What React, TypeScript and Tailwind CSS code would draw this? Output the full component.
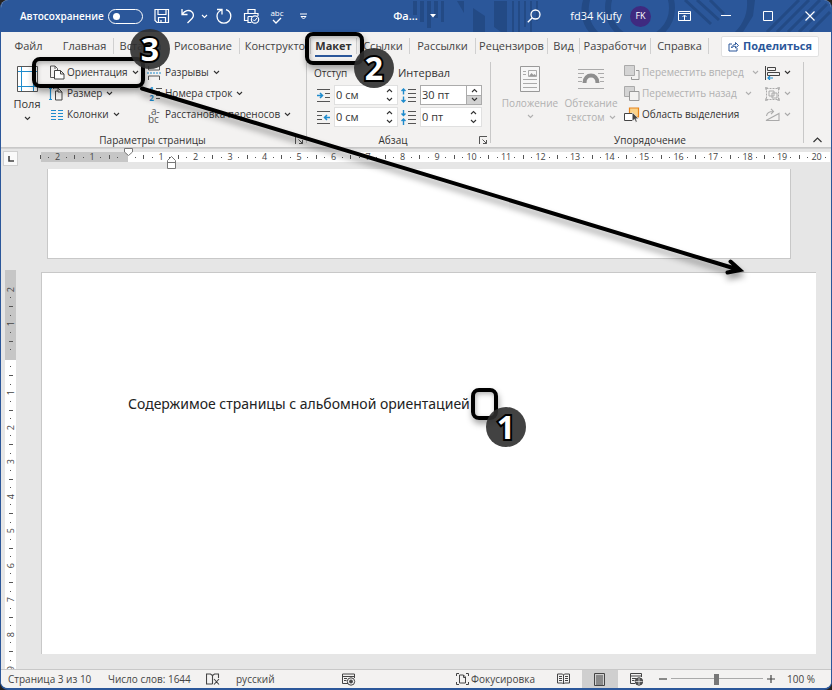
import type { ReactNode } from 'react'
import clsx from 'clsx'

const BLUE = '#1e8bcd'

function Svg({ w, h, className, children }: { w: number; h: number; className?: string; children: ReactNode }) {
  return (
    <svg width={w} height={h} viewBox={`0 0 ${w} ${h}`} fill="none" stroke="currentColor" strokeWidth="1" className={clsx('shrink-0', className)} aria-hidden="true">
      {children}
    </svg>
  )
}

function Chevron({ className }: { className?: string }) {
  return (
    <Svg w={7} h={5} className={className}>
      <path d="M1 1l2.500 2.500L6 1" strokeWidth="1.100" />
    </Svg>
  )
}

function Launcher() {
  return (
    <button type="button" aria-label="Параметры" className="text-[#555]">
      <Svg w={9} h={9}>
        <path d="M.5 8V.5H8M3.500 3.500L7.500 7.500M7.500 4v3.500H4" />
      </Svg>
    </button>
  )
}

const TABS = [
  { name: 'Файл', width: 'w-[55px]', line: false },
  { name: 'Главная', width: 'w-[58px]', line: true },
  { name: 'Вставка', width: 'w-[53px]', line: false },
  { name: 'Рисование', width: 'w-[73px]', line: true },
  { name: 'Конструкто', width: 'w-[71px]', line: true },
  { name: 'Макет', width: 'w-[46px]', line: true },
  { name: 'Ссылки', width: 'w-[53px]', line: true },
  { name: 'Рассылки', width: 'w-[66px]', line: true },
  { name: 'Рецензиров', width: 'w-[72px]', line: true },
  { name: 'Вид', width: 'w-8', line: true },
  { name: 'Разработчи', width: 'w-[71px]', line: true },
  { name: 'Справка', width: 'w-[58px]', line: true },
]

function TitlePattern() {
  return (
    <svg width="420" height="32" viewBox="412 0 420 32" className="absolute right-0 top-0" aria-hidden="true">
      <g fill="#234a85">
        <path d="M414 1h4v14h-4zM421 1h4v21h-4zM428 1h4v27h-4zM435 1h4v17h-4zM442 1h3v21h-3zM458 1h7v12zM474 8l12 8v16h-12zM495 1h13v31h-6l-7-5zM513 1h2v31h-2zM519 1h2v31h-2zM525 1h2v26h-2zM531 1h2v31h-2zM537 1h2v20h-2z" />
        <path d="M590 32c-8-10-9-22-6-32h7c-3 12-1 22 8 32zM756 0l-2 16-10 16h-8c9-9 13-20 12-32z" />
      </g>
      <g fill="none" stroke="#234a85">
        <circle cx="641" cy="8" r="32" strokeWidth="6" />
        <path d="M686 0l26 24M698 0l22 20M711 0l14 14M768 32l32-32M778 32l32-32M789 32l32-32M800 32l28-28M811 32l20-20" strokeWidth="3" />
      </g>
    </svg>
  )
}

function TitleBar() {
  return (
    <header className="relative flex h-8 shrink-0 items-center bg-[#2b579a] text-white">
      <TitlePattern />
      <label className="relative flex items-center pl-[19px] text-[10px] font-semibold">
        <span className="w-[88px] whitespace-nowrap">Автосохранение</span>
        <input
          type="checkbox"
          role="switch"
          className="h-[15px] w-[35px] appearance-none rounded-full border border-white before:mt-[3px] before:ml-1 before:block before:size-[7px] before:rounded-full before:bg-white"
        />
      </label>
      <div className="relative ml-1 flex items-center">
        <button type="button" aria-label="Сохранить" className="flex w-[30px] justify-center">
          <Svg w={16} h={16}>
            <path d="M1 1.500h13.500v13H3L1 12.500zM4 1.500v5h8v-5M4.500 14.500v-5h7v5M7 14v-2" strokeWidth="1.200" />
          </Svg>
        </button>
        <button type="button" aria-label="Отменить" className="flex w-[22px] justify-center">
          <Svg w={16} h={16}>
            <path d="M2 1v5.500h5.500M2.200 6.200C5 2.500 9 1.500 11.500 3.500s2.500 5 .5 7L7.500 15" strokeWidth="1.300" />
          </Svg>
        </button>
        <button type="button" aria-label="Список отмены" className="flex w-[10px] justify-center">
          <Chevron />
        </button>
        <button type="button" aria-label="Повторить" className="flex w-[30px] justify-center">
          <Svg w={16} h={16}>
            <path d="M1 1.500h5v5M5.500 2C2.500 3.200 1 5.500 1 8.300A6.800 6.800 0 0 0 14.800 8.300C14.800 5.200 12.800 2.600 10 1.700" strokeWidth="1.300" />
          </Svg>
        </button>
        <button type="button" aria-label="Печать" className="flex w-6 justify-center">
          <Svg w={17} h={16}>
            <path d="M5 5V1.500h7V5M5 12.500H1.500V5.500H15V8M5 8.500V14.500H8.500M5 8.500H9" strokeWidth="1.200" />
            <circle cx="12" cy="11.500" r="3.700" strokeWidth="1.200" />
            <path d="M10 11.500l1.500 1.500 2.500-3" />
          </Svg>
        </button>
        <button type="button" aria-label="Правописание" className="flex w-7 flex-col items-center text-[8px] leading-[9px]">
          <span>abc</span>
          <Svg w={10} h={7}>
            <path d="M1 3l3 3 5-5" strokeWidth="1.300" />
          </Svg>
        </button>
        <button type="button" aria-label="Настройка панели" className="flex w-6 justify-center">
          <Svg w={7} h={7}>
            <path d="M0 1h7" />
            <path d="M1 3.500h5L3.500 6z" />
          </Svg>
        </button>
      </div>
      <div className="relative flex flex-1 items-center justify-center gap-3 text-[11px] font-semibold">
        <span>Фа...</span>
        <Svg w={6} h={4}>
          <path d="M0 0h6L3 3.500z" fill="currentColor" stroke="none" />
        </Svg>
      </div>
      <div className="relative flex items-center">
        <button type="button" aria-label="Поиск" className="flex w-10 justify-center">
          <Svg w={14} h={14}>
            <circle cx="8.500" cy="5.500" r="4.500" strokeWidth="1.300" />
            <path d="M5.300 8.700L.8 13.200" strokeWidth="1.300" />
          </Svg>
        </button>
        <button type="button" className="ml-4 flex items-center gap-2 text-[11px]">
          <span className="w-[52px] whitespace-nowrap text-center">fd34 Kjufy</span>
          <span className="flex size-[21px] items-center justify-center rounded-full bg-[#3f2a80] text-[9px]">FK</span>
        </button>
        <button type="button" aria-label="Параметры ленты" className="ml-3 flex w-[42px] justify-center">
          <Svg w={13} h={10}>
            <path d="M.5.500h12v9H.5zM.5 2.500h12M6.500 9V4.500M4.500 6l2-2 2 2" />
          </Svg>
        </button>
        <button type="button" aria-label="Свернуть" className="flex w-[42px] justify-center">
          <Svg w={10} h={10}>
            <path d="M0 4.500h10" />
          </Svg>
        </button>
        <button type="button" aria-label="Развернуть" className="flex w-[42px] justify-center">
          <Svg w={10} h={10}>
            <path d="M.5.500h9v9h-9z" />
          </Svg>
        </button>
        <button type="button" aria-label="Закрыть" className="flex w-[42px] justify-center">
          <Svg w={10} h={10}>
            <path d="M.5.500l9 9M9.500.500l-9 9" strokeWidth="1.200" />
          </Svg>
        </button>
      </div>
    </header>
  )
}

function TabBar() {
  return (
    <nav className="flex h-[30px] shrink-0 items-center pb-0.5 text-[11px] text-[#444]">
      {TABS.map(tab => (
        <button
          key={tab.name}
          type="button"
          className={clsx('flex h-4 shrink-0 items-center justify-center whitespace-nowrap', tab.width, tab.line && 'border-r border-[#d0d0d0]')}
        >
          <span className={clsx(tab.name === 'Макет' && 'border-b-2 border-[#2b579a] pt-[3px] pb-px font-bold text-[#333]')}>{tab.name}</span>
        </button>
      ))}
      <button type="button" className="mr-3 ml-auto flex h-[21px] w-[98px] items-center justify-center gap-1 rounded-xs border border-[#e1e1e1] bg-white text-[11px] font-bold whitespace-nowrap text-[#2b579a]">
        <Svg w={11} h={11}>
          <path d="M4 3H1v7h8V7M3.500 7C4 4.500 5.500 3.500 7.500 3.500V1.500L10.500 4.500 7.500 7V5.300C5.800 5.300 4.500 5.700 3.500 7z" />
        </Svg>
        Поделиться
      </button>
    </nav>
  )
}

function RibbonRow({ icon, label, disabled, gap }: { icon: ReactNode; label: string; disabled?: boolean; gap?: string }) {
  return (
    <button type="button" disabled={disabled} className={clsx('flex h-[21px] items-center whitespace-nowrap', disabled && 'text-[#b0b0b0]')}>
      <span className="flex w-[18px] shrink-0">{icon}</span>
      {label}
      {gap && <Chevron className={gap} />}
    </button>
  )
}

function Spin({ label, value, icon, hot }: { label: string; value: string; icon: ReactNode; hot?: boolean }) {
  return (
    <label className="flex h-[22px] items-center gap-1 pl-[3px]">
      {icon}
      <span className={clsx('flex h-5 w-16 border bg-white', hot ? 'border-[#ababab]' : 'border-[#e0e0e0]')}>
        <input aria-label={label} defaultValue={value} className="w-0 flex-1 px-px text-[11px] text-[#333] outline-none" />
        <span className={clsx('flex w-[15px] flex-col', hot && 'border-l border-[#ababab]')}>
          <button type="button" aria-label="Больше" className="flex flex-1 items-center justify-center">
            <Chevron className="rotate-180" />
          </button>
          <button type="button" aria-label="Меньше" className={clsx('flex flex-1 items-center justify-center', hot && 'border-t border-[#ababab] bg-[#d2d2d2]')}>
            <Chevron />
          </button>
        </span>
      </span>
    </label>
  )
}

function GroupLabel({ name, launcher }: { name: string; launcher?: boolean }) {
  return (
    <div className="flex h-4 shrink-0 items-center pr-0.5">
      <span className="flex-1 text-center">{name}</span>
      {launcher && <Launcher />}
    </div>
  )
}

function IndentIcon({ right }: { right?: boolean }) {
  return (
    <Svg w={13} h={13}>
      <path d={right ? 'M0 .5h13M0 4.500h5M0 8.500h5M0 12.500h13' : 'M0 .5h13M8 4.500h5M8 8.500h5M0 12.500h13'} stroke="#555" />
      <path d={right ? 'M13 6.500H7.500M10 4L7.500 6.500 10 9' : 'M0 6.500h5.500M3 4l2.500 2.500L3 9'} stroke={BLUE} strokeWidth="1.500" />
    </Svg>
  )
}

function SpacingIcon({ after }: { after?: boolean }) {
  return (
    <Svg w={15} h={15}>
      <path d="M7 1.500h8M7 5.500h8M7 9.500h8M7 13.500h8" stroke="#555" />
      <path d={after ? 'M2.500 0v5.500M.5 3.500l2 2 2-2M2.500 15V9M.5 11l2-2 2 2' : 'M2.500 6.500V1M.5 3l2-2 2 2M2.500 8.500V14M.5 12l2 2 2-2'} stroke={BLUE} strokeWidth="1.400" />
    </Svg>
  )
}

function Ribbon() {
  return (
    <div className="flex h-[86px] shrink-0 border-b border-[#c8c8c8] pl-[9px] text-[10px] text-[#333]">
      <section className="mb-1 flex w-[297px] flex-col border-r border-[#c8c8c8]">
        <div className="flex h-[70px] shrink-0">
          <button type="button" className="flex w-[34px] flex-col items-center pt-1 text-[11px]">
            <Svg w={21} h={26}>
              <path d="M.5.500h20v25H.5z" fill="#fff" stroke="#555" />
              <path d="M4.500 1v24M16.500 1v24M1 5.500h19M1 20.500h19" stroke={BLUE} />
            </Svg>
            <span className="pt-1 leading-4">Поля</span>
            <Chevron className="mt-1" />
          </button>
          <div className="ml-[5px] w-[98px]">
            <RibbonRow
              label="Ориентация"
              gap="ml-1"
              icon={
                <Svg w={16} h={15}>
                  <path d="M5 12.500H1.500V1H6l2.500 2.500V5M6 1v3" stroke="#555" />
                  <path d="M5.500 5.500h6l3.500 3.500v5H5.500zM11.500 5.500V9H15" stroke="#444" fill="#fff" />
                </Svg>
              }
            />
            <RibbonRow
              label="Размер"
              gap="ml-1"
              icon={
                <Svg w={14} h={14}>
                  <path d="M1.500 1.500v11M0 1.500h3M0 12.500h3" stroke={BLUE} strokeWidth="1.200" />
                  <path d="M4.500 2V1H9l4 4v8H6.500V4H9M9 1v4h4" stroke="#444" />
                </Svg>
              }
            />
            <RibbonRow
              label="Колонки"
              gap="ml-1"
              icon={
                <Svg w={14} h={11} className="ml-px">
                  <path d="M1 1.500h5M1 4.500h5M1 7.500h5M1 10.500h5M8 1.500h5M8 4.500h5M8 7.500h5M8 10.500h5" stroke={BLUE} />
                </Svg>
              }
            />
          </div>
          <div>
            <RibbonRow
              label="Разрывы"
              gap="ml-1"
              icon={
                <Svg w={14} h={14}>
                  <path d="M1.500 0v4h11V0M1.500 14v-4h11v4" stroke="#555" />
                  <path d="M0 7h14" stroke={BLUE} strokeDasharray="2 1" />
                </Svg>
              }
            />
            <RibbonRow
              label="Номера строк"
              gap="ml-1"
              icon={
                <span className="flex gap-0.5 pl-0.5 text-[8px] leading-[8px] text-[#1e8bcd]">
                  <span className="flex w-[5px] flex-col font-bold">
                    <span>1</span>
                    <span>2</span>
                  </span>
                  <Svg w={6} h={16}>
                    <path d="M0 2.500h6M0 5.500h4M0 9.500h6M0 12.500h4" stroke="#555" />
                  </Svg>
                </span>
              }
            />
            <RibbonRow
              label="Расстановка переносов"
              gap="ml-1"
              icon={
                <span className="flex flex-col leading-[8px] text-[#555]">
                  <span className="pl-1">a-</span>
                  <span>bc</span>
                </span>
              }
            />
          </div>
        </div>
        <GroupLabel name="Параметры страницы" launcher />
      </section>

      <section className="mb-1 flex w-[184px] flex-col border-r border-[#c8c8c8]">
        <div className="grid h-[70px] shrink-0 grid-cols-[84px_84px] content-start pl-[7px]">
          <span className="flex h-[22px] items-center">Отступ</span>
          <span className="flex h-[22px] items-center text-[11px]">Интервал</span>
          <Spin label="Отступ слева" value="0 см" icon={<IndentIcon />} />
          <Spin label="Интервал перед" value="30 пт" icon={<SpacingIcon />} hot />
          <Spin label="Отступ справа" value="0 см" icon={<IndentIcon right />} />
          <Spin label="Интервал после" value="0 пт" icon={<SpacingIcon after />} />
        </div>
        <GroupLabel name="Абзац" launcher />
      </section>

      <section className="mb-1 flex w-[313px] flex-col border-r border-[#c8c8c8] pl-2">
        <div className="flex h-[70px] shrink-0">
          <button type="button" disabled className="flex w-[62px] flex-col items-center pt-1 leading-[14px] text-[#b0b0b0]">
            <Svg w={20} h={26}>
              <path d="M.5.500h19v25H.5z" stroke="#999" fill="#f6f6f6" />
              <path d="M8.500 4.500h8v6h-8zM3 5.500h3M3 8.500h3M3 13.500h14M3 17.500h14M3 21.500h14" stroke="#aaa" />
              <path d="M9 10l2.500-3 2 2 1-1 2 2z" fill="#999" stroke="none" />
            </Svg>
            <span className="pt-1">Положение</span>
            <Chevron className="mt-1" />
          </button>
          <button type="button" disabled className="flex w-[60px] flex-col items-center pt-1 leading-[14px] text-[#b0b0b0]">
            <Svg w={26} h={26}>
              <path d="M0 3.500h26M0 7.500h6M20 7.500h6M0 11.500h4M22 11.500h4M0 15.500h4M22 15.500h4M0 22.500h26" stroke="#aaa" />
              <path d="M6.500 17c0-10 13-10 13 0" stroke="#8e8e8e" strokeWidth="4" />
            </Svg>
            <span className="pt-1">Обтекание</span>
            <span className="flex items-center gap-1">
              текстом
              <Chevron />
            </span>
          </button>
          <div className="ml-[3px]">
            <RibbonRow
              disabled
              label="Переместить вперед"
              gap="ml-2"
              icon={
                <Svg w={16} h={15}>
                  <path d="M12 5.500h3v9H7.500V12" stroke="#999" />
                  <path d="M.5.500h10v10H.5z" fill="#d4d4d4" stroke="#aaa" />
                </Svg>
              }
            />
            <RibbonRow
              disabled
              label="Переместить назад"
              gap="ml-2"
              icon={
                <Svg w={16} h={15}>
                  <path d="M.5.500h10v10H.5z" fill="#d4d4d4" stroke="#aaa" />
                  <path d="M5.500 5.500H15v9H5.500z" fill="#f3f2f1" stroke="#999" />
                </Svg>
              }
            />
            <RibbonRow
              label="Область выделения"
              icon={
                <Svg w={16} h={16}>
                  <path d="M5.500 1h9v9h-9z" fill="#fbd38a" stroke="#e8841a" strokeWidth="1.200" />
                  <path d="M.5 6.500h8v7h-8z" fill="#fff" stroke="#444" />
                  <path d="M8.500 5.500v8.500l2-1.800 1.300 3 1.400-.6-1.300-2.900h2.600z" fill="#444" stroke="#fff" strokeWidth=".5" />
                </Svg>
              }
            />
          </div>
          <div className="mr-3 ml-auto flex flex-col">
            <button type="button" aria-label="Выровнять" className="flex h-[21px] items-center gap-1">
              <Svg w={15} h={14}>
                <path d="M.5 0v14M2.500 1.500h8v3h-8zM2.500 6.500h12v3h-12z" stroke="#444" />
                <path d="M8 12H3M5 10l-2 2 2 2" stroke={BLUE} strokeWidth="1.200" />
              </Svg>
              <Chevron />
            </button>
            <button type="button" disabled aria-label="Сгруппировать" className="flex h-[21px] items-center gap-1 text-[#aaa]">
              <Svg w={15} h={14}>
                <path d="M1.500 1.500h12v11h-12z" strokeDasharray="2 1" />
                <path d="M4 4h5v5H4zM7 6h5v5H7zM0 0h2v2H0zM13 0h2v2h-2zM0 12h2v2H0zM13 12h2v2h-2z" />
              </Svg>
              <Chevron />
            </button>
            <button type="button" disabled aria-label="Повернуть" className="flex h-[21px] items-center gap-1 text-[#aaa]">
              <Svg w={15} h={14}>
                <path d="M1 12.500h13V5.500zM1.500 8C2 4.500 4 3.500 8 3.500M6 .8l2.500 2.700L6 6.200" strokeWidth="1.100" />
              </Svg>
              <Chevron />
            </button>
          </div>
        </div>
        <GroupLabel name="Упорядочение" />
      </section>
      <button type="button" aria-label="Свернуть ленту" className="flex flex-1 items-end justify-center pb-1">
        <Svg w={9} h={6}>
          <path d="M.5 5l4-4 4 4" strokeWidth="1.200" />
        </Svg>
      </button>
    </div>
  )
}

type Mark = { kind: 'tick' | 'dot' | 'num'; text: string }

// four marks to a centimetre, `start` counted in quarters from the margin
function marks(start: number, count: number): Mark[] {
  return Array.from({ length: count }, (_, i) => {
    const q = start + i
    if (q === 0) return { kind: 'num', text: '' }
    if (q % 4 === 0) return { kind: 'num', text: String(Math.abs(q / 4)) }
    return { kind: q % 2 === 0 ? 'tick' : 'dot', text: '' }
  })
}

function TopRuler() {
  return (
    <div className="flex h-5 shrink-0 items-start">
      <button type="button" aria-label="Табуляция" className="mt-0.5 ml-0.5 flex size-[15px] shrink-0 items-center justify-center border border-[#d0d0d0] bg-[#fafafa] text-[#444]">
        <Svg w={6} h={6}>
          <path d="M1 0v5h5" strokeWidth="1.600" />
        </Svg>
      </button>
      <div className="relative mt-[3px] mr-px ml-[18px] flex h-2.5 flex-1 items-center bg-[linear-gradient(to_right,#e6e6e6_5px,#c6c6c6_5px,#c6c6c6_92px,#fff_92px)] text-[9px] text-[#444]">
        {marks(-10, 92).map((m, i) => (
          <span key={i} className="flex w-0 flex-1 items-center justify-center whitespace-nowrap">
            {m.kind === 'num' ? m.text : <i className={clsx('w-px shrink-0 bg-[#555]', m.kind === 'tick' ? 'h-1' : 'h-px')} />}
          </span>
        ))}
        <Svg w={9} h={8} className="absolute -top-1 left-[88px]">
          <path d="M.5.500h8V4l-4 3.500-4-3.500z" fill="#fff" stroke="#777" />
        </Svg>
        <Svg w={9} h={13} className="absolute top-1 left-[131px]">
          <path d="M.5 12.500v-8l4-4 4 4v8zM.5 6.500h8" fill="#fff" stroke="#777" />
        </Svg>
      </div>
    </div>
  )
}

function SideRuler() {
  return (
    <div className="mt-[101px] -mb-1 ml-1 flex w-[11px] shrink-0 flex-col bg-[linear-gradient(to_bottom,#c6c6c6_90px,#fff_90px)] pt-[15px] text-[9px] text-[#444]">
      {marks(-8, 45).map((m, i) => (
        <span key={i} className="flex h-0 flex-1 items-center justify-center">
          {m.kind === 'num' ? <span className="-rotate-90">{m.text}</span> : <i className={clsx('h-px shrink-0 bg-[#555]', m.kind === 'tick' ? 'w-1' : 'w-px')} />}
        </span>
      ))}
    </div>
  )
}

function StatusBar() {
  return (
    <footer className="relative flex h-[19px] shrink-0 items-center border-t border-[#c8c8c8] bg-[#f3f2f1] pl-[7px] text-[10px] whitespace-nowrap text-[#444]">
      <span className="w-[100px]">Страница 3 из 10</span>
      <span className="w-[98px]">Число слов: 1644</span>
      <button type="button" aria-label="Проверка правописания" className="w-[30px]">
        <Svg w={14} h={12}>
          <path d="M6.500 11H.5V1h4l2 1.500V11M6.500 2.500L8.500 1h4v4M8 6l5 5.500M13 6l-5 5.500" strokeWidth="1.100" />
        </Svg>
      </button>
      <button type="button">русский</button>
      <button type="button" aria-label="Запись макроса" className="ml-[67px]">
        <Svg w={14} h={13}>
          <path d="M6 10.500H.5V1h12v4M.5 3.500h12M2 5.500h3M2 7.500h2.500" />
          <circle cx="9" cy="8.500" r="3.700" />
          <circle cx="9" cy="8.500" r="1.500" fill="currentColor" />
        </Svg>
      </button>
      <div className="ml-auto flex items-center self-stretch">
        <button type="button" className="mr-2.5 flex items-center gap-0.5">
          <Svg w={13} h={12}>
            <path d="M.5 3V.5H3M10 .5h2.500V3M.5 9v2.500H3M12.500 9v2.500H10M3.500 2h4l2 2v6h-6zM7.500 2v2.500h2" />
          </Svg>
          Фокусировка
        </button>
        <button type="button" aria-label="Режим чтения" className="mx-3 text-[#444]">
          <Svg w={13} h={12}>
            <path d="M.5 1h5l1 1 1-1h5v9h-5l-1 1-1-1h-5zM6.500 2v9M2 3.500h3M2 5.500h3M2 7.500h3M8 3.500h3M8 5.500h3M8 7.500h3" />
          </Svg>
        </button>
        <button type="button" aria-label="Разметка страницы" className="flex w-9 items-center justify-center self-stretch bg-[#cfcfcf]">
          <Svg w={11} h={13}>
            <path d="M.5.500h10v12H.5zM2 3h7M2 5h7M2 7h7M2 9h7M2 11h7" />
          </Svg>
        </button>
        <button type="button" aria-label="Веб-документ" className="mx-3">
          <Svg w={13} h={13}>
            <path d="M5 10.500H.5V.5h11V4M.5 3h11M2 5.500h4M2 7.500h2.500" />
            <circle cx="9" cy="8.500" r="3.700" fill="#555" />
            <path d="M5.500 8.500h7M9 5v7" stroke="#f3f2f1" strokeWidth=".7" />
          </Svg>
        </button>
        <button type="button" aria-label="Уменьшить" className="mx-1">
          <Svg w={8} h={8}>
            <path d="M0 4h8" strokeWidth="1.200" />
          </Svg>
        </button>
        <input
          type="range"
          aria-label="Масштаб"
          min={0}
          max={100}
          defaultValue={50}
          className="h-3 w-[92px] appearance-none bg-[linear-gradient(to_bottom,transparent_5px,#aaa_5px,#aaa_6px,transparent_6px)] [&::-webkit-slider-thumb]:h-[11px] [&::-webkit-slider-thumb]:w-[5px] [&::-webkit-slider-thumb]:appearance-none [&::-webkit-slider-thumb]:bg-[#777]"
        />
        <button type="button" aria-label="Увеличить" className="mx-1">
          <Svg w={8} h={8}>
            <path d="M0 4h8M4 0v8" strokeWidth="1.200" />
          </Svg>
        </button>
        <span className="mr-4 ml-2">100 %</span>
      </div>
    </footer>
  )
}

function Frame({ className }: { className: string }) {
  return <div className={clsx('absolute rounded-lg border-4 border-black shadow-[1px_4px_6px_rgba(0,0,0,0.35),inset_1px_2px_5px_rgba(0,0,0,0.3)]', className)} />
}

function Badge({ n, className }: { n: number; className: string }) {
  return (
    <div className={clsx('absolute flex size-10 items-center justify-center rounded-full bg-[#2d2d2d]/90 text-[32px] leading-none font-bold text-white [-webkit-text-stroke:4px_black] [paint-order:stroke_fill]', className)}>
      {n}
    </div>
  )
}

function Annotations() {
  return (
    <div className="pointer-events-none absolute inset-0">
      <Frame className="top-[57px] left-8 h-[31px] w-[113px]" />
      <Frame className="top-8 left-[305px] h-[33px] w-[59px]" />
      <Frame className="top-[388px] left-[471px] h-8 w-[27px]" />
      <svg width="832" height="300" className="absolute top-0 left-0 drop-shadow-[1px_5px_3px_rgba(0,0,0,0.4)]" aria-hidden="true">
        <path d="M142 88.500L738 269.500M730.500 261.500L740 270 727.500 272.500" fill="none" stroke="#000" strokeWidth="4" strokeLinecap="round" />
      </svg>
      <Badge n={3} className="top-[29px] left-[130px]" />
      <Badge n={2} className="top-[48px] left-[354px]" />
      <Badge n={1} className="top-[407px] left-[486px]" />
    </div>
  )
}

export default function App() {
  return (
    <div className="relative h-screen bg-[#26221f] font-['Open_Sans',sans-serif]">
      <div className="flex h-full flex-col overflow-hidden rounded-lg border-x border-b-2 border-[#2b579a] bg-[#f3f2f1]">
        <TitleBar />
        <TabBar />
        <Ribbon />
        <div className="flex min-h-0 flex-1 flex-col overflow-hidden bg-[#e6e6e6]">
          <div className="h-px shrink-0 bg-[#d2d2d2]" />
          <TopRuler />
          <main className="flex min-h-0 flex-1">
            <SideRuler />
            <div className="flex flex-1 flex-col pr-[15px] pb-[15px] pl-[25px]">
              <div className="mr-[25px] ml-1.5 h-[90px] shrink-0 border border-t-0 border-[#c8c8c8] bg-white" />
              <div className="mt-[13px] flex-1 border-t border-l border-[#c8c8c8] bg-white pt-[121px] pl-[86px]">
                <p className="font-['Noto_Sans',sans-serif] text-sm leading-5 text-[#222]">Содержимое страницы с альбомной ориентацией</p>
              </div>
            </div>
          </main>
        </div>
        <StatusBar />
      </div>
      <Annotations />
    </div>
  )
}
